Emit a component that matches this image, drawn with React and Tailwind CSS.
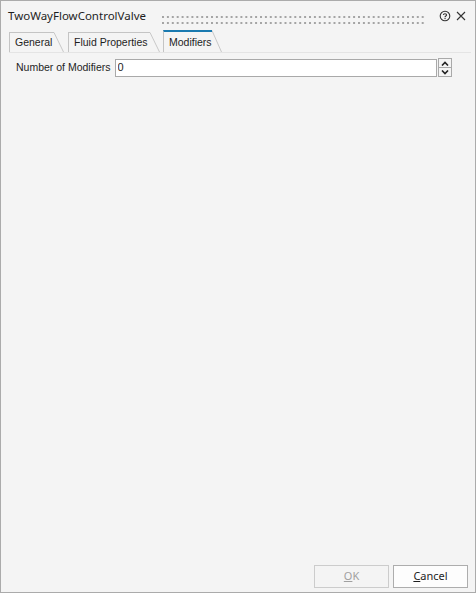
import React, { useState } from 'react';

const titleFont = { fontFamily: '"Noto Sans", "Open Sans", sans-serif' };
const uiFont = { fontFamily: '"Liberation Sans", Arial, sans-serif' };

const tabs = [
  { label: 'General', w: 'w-[45px]' },
  { label: 'Fluid Properties', w: 'w-[82px]' },
  { label: 'Modifiers', w: 'w-[49px]' }
];

const Tab = ({ label, w, active, onClick }) => (
  <div className={'flex items-stretch cursor-default ' + (active ? 'h-[22px]' : 'h-[20px]')} onClick={onClick}>
    <div
      className={
        w + ' flex items-center pl-[5px] border-l border-[#c4c4c4] ' +
        (active ? 'border-t-2 border-t-[#1a7ab0]' : 'border-t border-t-[#c4c4c4]')
      }
    >
      <span className="leading-none text-[10.5px] text-[#1e1e1e] whitespace-nowrap">{label}</span>
    </div>
    <svg width="10" viewBox="0 0 10 20" preserveAspectRatio="none" className="h-full">
      <path d="M0 0.5 L9.5 20" stroke="#c8c8c8" strokeWidth="1" fill="none" vectorEffect="non-scaling-stroke" />
    </svg>
  </div>
);

// dotted drag grip in the title bar
const Grip = () => (
  <svg className="flex-1 h-[16px] ml-[16px] mr-[13px]">
    <defs>
      <pattern id="dots" x="0" y="8" width="4.9" height="6" patternUnits="userSpaceOnUse">
        <rect x="0" y="0" width="2" height="2" fill="#a4a4a4" />
      </pattern>
    </defs>
    <rect x="0" y="8" width="100%" height="8" fill="url(#dots)" />
  </svg>
);

export default function App() {
  const [tab, setTab] = useState('Modifiers');
  const [count, setCount] = useState(0);

  return (
    <div style={uiFont} className="w-[476px] h-[593px] border border-[#ababab] bg-[#f4f4f4] flex flex-col text-[10.5px] text-[#1e1e1e]">
      {/* title bar */}
      <div className="flex items-center h-[30px] pl-[7px] pr-[9px]">
        <span style={titleFont} className="text-[11.5px] text-[#1e1e1e]">TwoWayFlowControlValve</span>
        <Grip />
        <svg width="12" height="12" viewBox="0 0 12 12" className="mr-[5px]">
          <circle cx="6" cy="6" r="4.8" stroke="#333" strokeWidth="1.1" fill="none" />
          <path d="M4.4 4.9 C4.4 3.3 7.6 3.3 7.6 4.9 C7.6 6 6 6 6 7.2" stroke="#333" strokeWidth="1.1" fill="none" />
          <rect x="5.5" y="8" width="1.1" height="1.1" fill="#333" />
        </svg>
        <svg width="10" height="10" viewBox="0 0 10 10">
          <path d="M1 1 L9 9 M9 1 L1 9" stroke="#333" strokeWidth="1.1" />
        </svg>
      </div>

      {/* tabs */}
      <div className="flex items-end h-[22px] ml-[8px] mr-[4px] border-b border-[#e4e4e4]">
        {tabs.map((t, i) => (
          <div key={t.label} className={i === 0 ? '' : i === 1 ? 'ml-[4px]' : 'ml-[3px]'}>
            <Tab label={t.label} w={t.w} active={t.label === tab} onClick={() => setTab(t.label)} />
          </div>
        ))}
      </div>

      {/* content */}
      <div className="flex items-center mt-[5px] pl-[15px] pr-[23px]">
        <span className="mr-[4px] whitespace-nowrap">Number of Modifiers</span>
        <div className="flex-1 flex h-[18px] border border-[#a9a9a9] bg-white">
          <input
            value={count}
            onChange={e => setCount(e.target.value)}
            className="flex-1 px-[2px] text-[11px] outline-none bg-transparent"
            style={uiFont}
          />
        </div>
        <div className="flex flex-col w-[14px] h-[19px] ml-[1px] border border-[#a9a9a9] bg-[#f4f4f4]">
          <button className="flex-1 flex items-center justify-center border-b border-[#a9a9a9]" onClick={() => setCount(Number(count) + 1)}>
            <svg width="8" height="5" viewBox="0 0 8 5"><path d="M1 4.5 L4 1.5 L7 4.5" stroke="#222" strokeWidth="1.6" fill="none" /></svg>
          </button>
          <button className="flex-1 flex items-center justify-center" onClick={() => setCount(Math.max(0, Number(count) - 1))}>
            <svg width="8" height="5" viewBox="0 0 8 5"><path d="M1 0.5 L4 3.5 L7 0.5" stroke="#222" strokeWidth="1.6" fill="none" /></svg>
          </button>
        </div>
      </div>

      <div className="flex-1" />

      {/* buttons */}
      <div className="flex justify-end gap-[4px] pr-[7px] pb-[4px]">
        <button disabled className="w-[75px] h-[23px] border border-[#cccccc] bg-[#f4f4f4] text-[#a0a0a0] text-[11px]" style={titleFont}>
          <span className="underline">O</span>K
        </button>
        <button className="w-[75px] h-[23px] border border-[#adadad] bg-[#fdfdfd] text-[#1e1e1e] text-[11px]" style={titleFont}>
          <span className="underline">C</span>ancel
        </button>
      </div>
    </div>
  );
}
